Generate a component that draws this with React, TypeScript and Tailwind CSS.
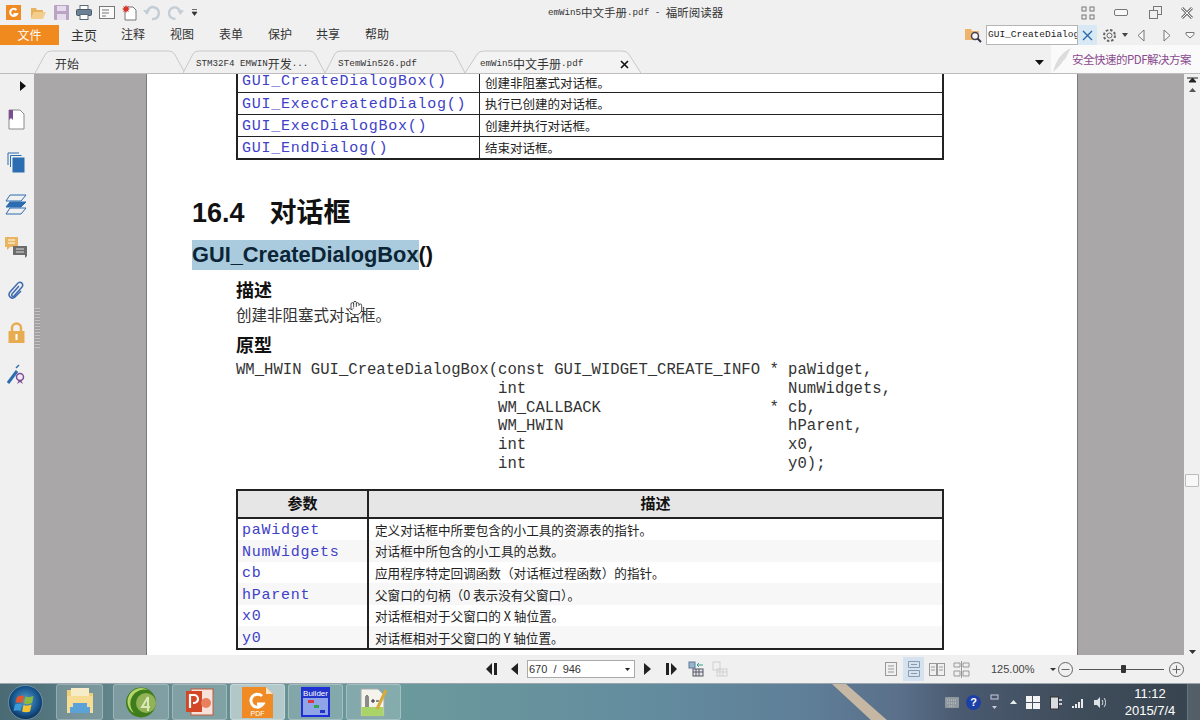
import { Hand } from "lucide-react";

const CJK = '"Noto Sans CJK SC", sans-serif';
const MONO = '"Liberation Mono", monospace';

const topRows = [
  { fn: "GUI_CreateDialogBox()", desc: "创建非阻塞式对话框。", h: "h-[18px]", fnCls: "self-start leading-[16px]", descCls: "self-start leading-[18px]" },
  { fn: "GUI_ExecCreatedDialog()", desc: "执行已创建的对话框。", h: "h-[22px]", fnCls: "pt-[3px]", descCls: "pt-[2px]" },
  { fn: "GUI_ExecDialogBox()", desc: "创建并执行对话框。", h: "h-[22px]", fnCls: "pt-[3px]", descCls: "pt-[2px]" },
  { fn: "GUI_EndDialog()", desc: "结束对话框。", h: "h-[22px]", fnCls: "pt-[3px]", descCls: "pt-[2px]" },
];

const paramRows = [
  { name: "paWidget", desc: "定义对话框中所要包含的小工具的资源表的指针。" },
  { name: "NumWidgets", desc: "对话框中所包含的小工具的总数。" },
  { name: "cb", desc: "应用程序特定回调函数（对话框过程函数）的指针。" },
  { name: "hParent", desc: "父窗口的句柄（0 表示没有父窗口）。" },
  { name: "x0", desc: "对话框相对于父窗口的 X 轴位置。" },
  { name: "y0", desc: "对话框相对于父窗口的 Y 轴位置。" },
];

const codeLines = [
  "WM_HWIN GUI_CreateDialogBox(const GUI_WIDGET_CREATE_INFO * paWidget,",
  "                            int                            NumWidgets,",
  "                            WM_CALLBACK                  * cb,",
  "                            WM_HWIN                        hParent,",
  "                            int                            x0,",
  "                            int                            y0);",
];

const menus = [
  { label: "主页", cls: "w-[50px] text-[13px]" },
  { label: "注释", cls: "w-[49px]" },
  { label: "视图", cls: "w-[49px]" },
  { label: "表单", cls: "w-[49px]" },
  { label: "保护", cls: "w-[48px]" },
  { label: "共享", cls: "w-[49px]" },
  { label: "帮助", cls: "w-[49px]" },
];

const TabShape = ({ active }: { active?: boolean }) => (
  <svg className="absolute inset-0 h-full w-full" viewBox="0 0 100 23" preserveAspectRatio="none">
    <path
      d="M0 23 L7 4 Q8 1 11 1 L89 1 Q92 1 93 4 L100 23"
      fill={active ? "#f3f3f3" : "#f0f0f0"}
      stroke="#c8c8c8"
      strokeWidth="1"
      vectorEffect="non-scaling-stroke"
    />
  </svg>
);

const Tab = ({ className, children, active }: { className: string; children: React.ReactNode; active?: boolean }) => (
  <div className={`relative h-[23px] shrink-0 ${className}`}>
    <TabShape active={active} />
    <div className="relative flex h-full items-center whitespace-nowrap pt-[5px] text-[12px] text-[#333]">{children}</div>
  </div>
);

const SideItem = ({ children }: { children: React.ReactNode }) => (
  <div className="flex h-[42.5px] items-center justify-center">{children}</div>
);

const TaskButton = ({ className, children, active }: { className: string; children: React.ReactNode; active?: boolean }) => (
  <div
    className={`flex h-[36px] shrink-0 items-center justify-center rounded-[3px] border border-[#ffffff40] ${
      active ? "bg-[#ffffff80]" : "bg-[#ffffff2e]"
    } ${className}`}
  >
    {children}
  </div>
);

export default function App() {
  return (
    <div
      className="flex h-[720px] w-[1200px] flex-col overflow-hidden bg-[#f0f0f0]"
      style={{ fontFamily: '"Noto Sans CJK SC", "Liberation Sans", sans-serif' }}
    >
      {/* title bar */}
      <div className="flex h-[25px] shrink-0 items-center pl-[6px]">
        <svg width="15" height="15" viewBox="0 0 15 15">
          <rect width="15" height="15" fill="#f08a24" />
          <path d="M10.500 5 A3.600 3.600 0 1 0 11 9 H7.500" fill="none" stroke="#fff" strokeWidth="2" />
        </svg>
        <svg className="ml-[9px]" width="16" height="14" viewBox="0 0 16 14">
          <path d="M1 2h5l1 2h6v2H4L1 13z" fill="#e8b25c" />
          <path d="M4 6h12l-3 7H1z" fill="#f3cd8c" />
        </svg>
        <svg className="ml-[8px]" width="15" height="15" viewBox="0 0 15 15">
          <rect width="15" height="15" rx="1" fill="#b9a4c6" />
          <rect x="3" y="1" width="9" height="5" fill="#e6dcec" />
          <rect x="3" y="9" width="9" height="6" fill="#e6dcec" />
        </svg>
        <svg className="ml-[7px]" width="16" height="15" viewBox="0 0 16 15">
          <rect x="4" y="0.500" width="8" height="4" fill="#fff" stroke="#5a6a7a" />
          <rect x="0.500" y="4.500" width="15" height="6" rx="1" fill="#6c8196" stroke="#4a5a6a" />
          <rect x="4" y="9.500" width="8" height="5" fill="#fff" stroke="#5a6a7a" />
        </svg>
        <svg className="ml-[7px]" width="16" height="13" viewBox="0 0 16 13">
          <rect x="0.500" y="0.500" width="15" height="12" fill="#fafafa" stroke="#777" />
          <path d="M3 4h7M3 7h7M3 10h4" stroke="#777" />
        </svg>
        <svg className="ml-[7px]" width="15" height="16" viewBox="0 0 15 16">
          <path d="M5 2h6l3 3v10H3V6" fill="#fff" stroke="#777" />
          <path d="M4 0l1 2 2-1-1 2 2 1-2 1 1 2-2-1-1 2-1-2-2 1 1-2-2-1 2-1-1-2 2 1z" fill="#d9342b" />
        </svg>
        <svg className="ml-[6px]" width="18" height="16" viewBox="0 0 18 16">
          <path d="M4 7 A6 6 0 1 1 9 14" fill="none" stroke="#c3cdd6" strokeWidth="2.500" />
          <path d="M0 5h7l-3 5z" fill="#c3cdd6" />
        </svg>
        <svg className="ml-[6px]" width="17" height="16" viewBox="0 0 18 16">
          <path d="M14 7 A6 6 0 1 0 9 14" fill="none" stroke="#c3cdd6" strokeWidth="2.500" />
          <path d="M18 5h-7l3 5z" fill="#c3cdd6" />
        </svg>
        <svg className="ml-[7px]" width="7" height="7" viewBox="0 0 7 7">
          <path d="M1 0.500h5M1 3h5L3.500 6.500z" fill="#333" stroke="#333" strokeWidth="0.700" />
        </svg>
        <div className="ml-[350px] flex w-[176px] items-center whitespace-pre text-[11.500px] text-[#333]">
          <span style={{ fontFamily: MONO }} className="text-[9.200px]">emWin5</span>
          <span>中文手册</span>
          <span style={{ fontFamily: MONO }} className="text-[9.200px]">.pdf - </span>
          <span>福昕阅读器</span>
        </div>
        <div className="ml-[357px] flex items-center">
          <svg width="14" height="14" viewBox="0 0 14 14" fill="none" stroke="#777">
            <rect x="1" y="1" width="4" height="4" />
            <rect x="9" y="1" width="4" height="4" />
            <rect x="1" y="9" width="4" height="4" />
            <rect x="9" y="9" width="4" height="4" />
          </svg>
          <svg className="ml-[19px]" width="14" height="8" viewBox="0 0 14 8">
            <rect x="0.500" y="0.500" width="13" height="6" rx="1.500" fill="#f8f8f8" stroke="#777" />
          </svg>
          <svg className="ml-[21px]" width="13" height="13" viewBox="0 0 13 13" fill="#f0f0f0" stroke="#777">
            <rect x="4.500" y="0.500" width="8" height="8" />
            <rect x="0.500" y="4.500" width="8" height="8" />
          </svg>
          <svg className="ml-[18px]" width="14" height="12" viewBox="0 0 14 12">
            <path d="M2 1l10 10M12 1L2 11" stroke="#777" strokeWidth="3" />
            <path d="M2 1l10 10M12 1L2 11" stroke="#f5f5f5" strokeWidth="1" />
          </svg>
        </div>
      </div>

      {/* ribbon tabs */}
      <div className="flex h-[20px] shrink-0 items-center">
        <div className="flex h-full w-[59px] items-center justify-center bg-[#f08a1e] text-[12px] text-white">文件</div>
        <div className="ml-[12px] flex text-[12px] text-[#333]">
          {menus.map((m) => (
            <span key={m.label} className={m.cls}>{m.label}</span>
          ))}
        </div>
        <svg className="ml-[551px]" width="17" height="16" viewBox="0 0 17 16">
          <path d="M0 2h6l1 2h7v9H0z" fill="#eeb56a" />
          <circle cx="10" cy="9" r="3.500" fill="#f7f7f7" stroke="#445" strokeWidth="1.500" />
          <path d="M12.500 11.500L16 15" stroke="#334" strokeWidth="2" />
        </svg>
        <div
          className="ml-[4px] flex h-[20px] w-[92px] shrink-0 items-center overflow-hidden whitespace-nowrap border border-[#b5b5b5] bg-white pl-[1px] text-[9.500px] text-[#222]"
          style={{ fontFamily: MONO }}
        >
          GUI_CreateDialog
        </div>
        <div className="flex h-[20px] w-[19px] shrink-0 items-center justify-center bg-[#d9e8f5]">
          <svg width="11" height="11" viewBox="0 0 11 11">
            <path d="M1 1l9 9M10 1l-9 9" stroke="#2a6aa8" strokeWidth="1.400" />
          </svg>
        </div>
        <svg className="ml-[5px] shrink-0" width="15" height="15" viewBox="0 0 15 15" fill="none" stroke="#666">
          <circle cx="7.500" cy="7.500" r="2.500" />
          <circle cx="7.500" cy="7.500" r="5.500" strokeDasharray="2.500 1.800" strokeWidth="2" />
        </svg>
        <svg className="ml-[5px] shrink-0" width="6" height="4" viewBox="0 0 6 4">
          <path d="M0 0h6L3 4z" fill="#444" />
        </svg>
        <svg className="ml-[9px] shrink-0" width="8" height="13" viewBox="0 0 8 13">
          <path d="M7 1L1 6.500 7 12z" fill="#f8f8f8" stroke="#777" />
        </svg>
        <svg className="ml-[18px] shrink-0" width="8" height="13" viewBox="0 0 8 13">
          <path d="M1 1l6 5.500L1 12z" fill="#f8f8f8" stroke="#777" />
        </svg>
        <svg className="ml-[14px] shrink-0" width="10" height="8" viewBox="0 0 10 8">
          <path d="M1 1.500h8v2L5 7 1 3.500z" fill="#f8f8f8" stroke="#777" />
        </svg>
      </div>

      {/* document tabs */}
      <div className="flex h-[29px] shrink-0 items-end border-b border-[#bdbdbd]">
        <Tab className="ml-[35px] w-[150px]"><span className="pl-[20px]">开始</span></Tab>
        <Tab className="-ml-[2px] w-[142px]">
          <span className="pl-[13px] text-[9.200px]" style={{ fontFamily: MONO }}>STM32F4 EMWIN</span>
          <span>开发</span>
          <span className="text-[9.200px]" style={{ fontFamily: MONO }}>...</span>
        </Tab>
        <Tab className="w-[140px]">
          <span className="pl-[13px] text-[9.400px]" style={{ fontFamily: MONO }}>STemWin526.pdf</span>
        </Tab>
        <Tab active className="w-[176px]">
          <span className="pl-[15px] text-[9.200px]" style={{ fontFamily: MONO }}>emWin5</span>
          <span>中文手册</span>
          <span className="text-[9.200px]" style={{ fontFamily: MONO }}>.pdf</span>
          <svg className="ml-[37px]" width="9" height="9" viewBox="0 0 9 9">
            <path d="M1 1l7 7M8 1L1 8" stroke="#111" strokeWidth="1.600" />
          </svg>
        </Tab>
        <svg className="mb-[8px] ml-[394px]" width="9" height="5" viewBox="0 0 9 5">
          <path d="M0 0h9L4.500 5z" fill="#111" />
        </svg>
        <div className="ml-[7px] flex h-[28px] w-[150px] items-center bg-[#fafafa] pt-[2px]">
          <svg className="ml-[1px]" width="20" height="26" viewBox="0 0 20 26">
            <path d="M1 25C4 13 10 5 19 1 15 7 15 11 11 14 9 18 5 21 1 25z" fill="#dcdcdc" />
          </svg>
          <span className="whitespace-nowrap text-[11.500px] tracking-[-0.500px] text-[#8a4b8f]">安全快速的PDF解决方案</span>
        </div>
      </div>

      {/* main area */}
      <div className="flex min-h-0 flex-1">
        <div className="flex w-[34px] shrink-0 flex-col items-center pr-[2px]">
          <div className="flex h-[24.500px] w-full items-center justify-end pr-[6px]">
            <svg width="6" height="10" viewBox="0 0 6 10"><path d="M0 0l6 5-6 5z" fill="#111" /></svg>
          </div>
          <SideItem>
            <svg width="17" height="21" viewBox="0 0 17 21">
              <path d="M1 1h11l4 4v15H1z" fill="#fff" stroke="#8a8a8a" />
              <path d="M1 1h4v10L3 9l-2 2z" fill="#7d4d93" />
            </svg>
          </SideItem>
          <SideItem>
            <svg width="18" height="21" viewBox="0 0 18 21" fill="none" stroke="#2c6cb0">
              <path d="M1 13V1h11" />
              <path d="M3.500 15V3.500h11" />
              <rect x="6" y="6" width="11" height="14" fill="#2c6cb0" />
            </svg>
          </SideItem>
          <SideItem>
            <svg width="22" height="21" viewBox="0 0 22 21" stroke="#2c6cb0" fill="none">
              <path d="M5 1h16l-5 6H1z" />
              <path d="M5 8h16l-5 5H1z" fill="#2c6cb0" />
              <path d="M5 14h16l-5 6H1z" />
            </svg>
          </SideItem>
          <SideItem>
            <svg width="22" height="21" viewBox="0 0 22 21">
              <path d="M0 0h13v10H5l-3 3v-3H0z" fill="#e8b660" />
              <path d="M3 3h7M3 6h7" stroke="#fff" />
              <path d="M8 9h14v10l-2 2v-3H8z" fill="#6c6c6c" />
              <path d="M11 12h8M11 15h8" stroke="#ddd" />
            </svg>
          </SideItem>
          <SideItem>
            <svg width="18" height="20" viewBox="0 0 18 20" fill="none">
              <path d="M12 6L5 14c-1 2 1 3 2 2L15 7c2-3-1-6-4-4L3 12c-3 4 2 8 5 5l6-6" stroke="#3f6cb0" strokeWidth="1.500" />
            </svg>
          </SideItem>
          <SideItem>
            <svg width="17" height="21" viewBox="0 0 17 21">
              <path d="M4 9V6a4.500 4.500 0 0 1 9 0v3" fill="none" stroke="#e8ac50" strokeWidth="2.500" />
              <rect x="0.500" y="9" width="16" height="12" fill="#e8ac50" />
              <rect x="7.500" y="12" width="2" height="6" fill="#fff" />
            </svg>
          </SideItem>
          <SideItem>
            <svg width="19" height="21" viewBox="0 0 19 21">
              <path d="M1 19L10 7" stroke="#2c6cb0" strokeWidth="3" />
              <path d="M9 4l3-3" stroke="#2c6cb0" strokeWidth="1.500" />
              <circle cx="13" cy="13" r="3.500" fill="#f0e8f4" stroke="#7d4d93" strokeWidth="1.500" />
              <path d="M10 20l2-4h2l2 4-3-2z" fill="#7d4d93" />
            </svg>
          </SideItem>
        </div>

        {/* left gutter */}
        <div className="relative w-[113px] shrink-0 border-r border-[#7a7a7a] bg-[#a9a7a8]">
          <div className="absolute left-[1px] top-[234px] h-[40px] w-[5px] bg-[repeating-linear-gradient(to_bottom,#c4c4c4_0,#c4c4c4_1px,#a0a0a0_1px,#a0a0a0_3px)]" />
        </div>

        {/* pdf page */}
        <div className="relative w-[930px] shrink-0 overflow-hidden bg-white pl-[45px]">
          <div className="ml-[44px] w-[708px] border-x-2 border-b-2 border-[#222]">
            {topRows.map((r, i) => (
              <div key={r.fn} className={`flex ${r.h} ${i > 0 ? "border-t border-[#222]" : ""}`}>
                <div
                  className="flex w-[242px] items-center whitespace-nowrap border-r border-[#222] pl-[4px] text-[15px] tracking-[0.750px] text-[#4040c8]"
                  style={{ fontFamily: MONO }}
                >
                  <span className={r.fnCls}>{r.fn}</span>
                </div>
                <div className="flex items-center pl-[5px] text-[12.500px] text-[#222]" style={{ fontFamily: CJK }}>
                  <span className={r.descCls}>{r.desc}</span>
                </div>
              </div>
            ))}
          </div>

          <div className="mt-[37px] flex h-[32px] items-center whitespace-pre text-[27px] font-bold text-[#111]" style={{ fontFamily: '"Liberation Sans", ' + CJK }}>
            16.4<span className="ml-[25px]">对话框</span>
          </div>
          <div className="mt-[11px] flex h-[30px] items-center text-[21.800px] font-bold text-[#111]" style={{ fontFamily: '"Liberation Sans", sans-serif' }}>
            <span className="bg-[#a9cbdd] leading-[30px] text-[#0c2536]">GUI_CreateDialogBox</span>()
          </div>

          <div className="ml-[44px]">
            <div className="mt-[7px] flex h-[24px] items-center text-[18px] font-bold text-[#111]">描述</div>
            <div className="mt-[2px] flex h-[24px] items-center text-[15.500px] text-[#333]">创建非阻塞式对话框。</div>
            <div className="mt-[5px] flex h-[24px] items-center text-[18px] font-bold text-[#111]">原型</div>
            <div
              className="mt-[5px] whitespace-pre text-[15.600px] leading-[18.750px] text-[#333]"
              style={{ fontFamily: MONO }}
            >
              {codeLines.map((l) => (
                <div key={l}>{l}</div>
              ))}
            </div>

            <div className="mt-[15px] w-[708px] border-2 border-[#222]">
              <div className="flex h-[28px] border-b-2 border-[#222] bg-[#e6e6e6] text-[15px] font-bold text-[#111]">
                <div className="flex w-[131px] items-center justify-center border-r-2 border-[#222]">参数</div>
                <div className="flex flex-1 items-center justify-center">描述</div>
              </div>
              {paramRows.map((r, i) => (
                <div key={r.name} className={`flex h-[21.600px] ${i % 2 === 1 ? "bg-[#f7f7f7]" : "bg-white"}`}>
                  <div
                    className="flex w-[131px] items-center border-r-2 border-[#222] pl-[4px] pt-[4px] text-[15px] tracking-[0.750px] text-[#4040c8]"
                    style={{ fontFamily: MONO }}
                  >
                    {r.name}
                  </div>
                  <div className="flex items-center pl-[6px] pt-[2px] text-[12.600px] text-[#222]">{r.desc}</div>
                </div>
              ))}
            </div>
          </div>

          <Hand className="absolute left-[200px] top-[226px] text-[#222]" size={16} strokeWidth={1.200} fill="#fff" />
        </div>

        {/* right gutter */}
        <div className="w-[107px] shrink-0 border-l border-[#7a7a7a] bg-[#a9a7a8]" />

        {/* scrollbar */}
        <div className="flex w-[16px] shrink-0 flex-col items-center pt-[3px]">
          <svg width="11" height="6" viewBox="0 0 11 6"><path d="M0 1h11M5.500 1L2 5h7z" fill="#222" stroke="#222" /></svg>
          <svg className="mt-[5px]" width="7" height="4" viewBox="0 0 7 4"><path d="M3.500 0L7 4H0z" fill="#555" /></svg>
          <div className="mt-[382px] h-[13px] w-[14px] rounded-[1px] border border-[#bbb] bg-[#f8f8f8]" />
          <svg className="mt-[163px]" width="7" height="4" viewBox="0 0 7 4"><path d="M0 0h7L3.500 4z" fill="#333" /></svg>
        </div>
      </div>

      {/* status bar */}
      <div className="flex h-[28px] shrink-0 items-center">
        <svg className="ml-[485px]" width="13" height="12" viewBox="0 0 13 12" fill="#222">
          <path d="M7 0v12L1 6zM9 0h3v12H9z" />
        </svg>
        <svg className="ml-[12px]" width="9" height="12" viewBox="0 0 9 12"><path d="M8 0v12L1 6z" fill="#222" /></svg>
        <div className="ml-[8px] flex h-[18px] w-[108px] items-center justify-between border border-[#aaa] bg-white pl-[1px] pr-[4px] text-[11px] text-[#333]" style={{ fontFamily: '"Liberation Sans", sans-serif' }}>
          <span className="whitespace-pre">670  /  946</span>
          <svg width="5" height="3" viewBox="0 0 5 3"><path d="M0 0h5L2.500 3z" fill="#222" /></svg>
        </div>
        <svg className="ml-[8px]" width="9" height="12" viewBox="0 0 9 12"><path d="M1 0v12l7-6z" fill="#222" /></svg>
        <svg className="ml-[13px]" width="13" height="12" viewBox="0 0 13 12" fill="#222">
          <path d="M1 0h3v12H1zM6 0v12l6-6z" />
        </svg>
        <svg className="ml-[10px]" width="16" height="16" viewBox="0 0 16 16" fill="none">
          <rect x="1" y="1" width="6" height="6" fill="#9ab4cc" stroke="#5a7a9a" />
          <path d="M9 4h6M11 2L9 4l2 2" stroke="#3aa08a" />
          <rect x="5" y="8" width="10" height="7" fill="#e8e8e8" stroke="#556" />
          <path d="M8 8v7M11 8v7M5 11h10" stroke="#556" />
        </svg>
        <svg className="ml-[8px]" width="16" height="16" viewBox="0 0 16 16" fill="none" stroke="#cfcfcf">
          <rect x="1" y="1" width="7" height="8" />
          <rect x="5" y="8" width="10" height="7" />
          <path d="M8 8v7M11 8v7M5 11h10" />
        </svg>
        <svg className="ml-[157px]" width="12" height="14" viewBox="0 0 12 14" fill="none" stroke="#999">
          <rect x="0.500" y="0.500" width="11" height="13" />
          <path d="M3 4h6M3 7h6M3 10h6" />
        </svg>
        <div className="ml-[6px] flex h-[24px] w-[21px] items-center justify-center bg-[#d5e3f1]">
          <svg width="12" height="16" viewBox="0 0 12 16" fill="none" stroke="#8a9bb0">
            <path d="M0.500 0.500h11v6h-11zM0.500 9.500h11v6h-11zM3 3.500h6M3 12.500h6" />
          </svg>
        </div>
        <svg className="ml-[5px]" width="16" height="13" viewBox="0 0 16 13" fill="none" stroke="#999">
          <rect x="0.500" y="0.500" width="7" height="12" />
          <rect x="8.500" y="0.500" width="7" height="12" />
          <path d="M2 4h4M2 7h4M10 4h4M10 7h4" />
        </svg>
        <svg className="ml-[8px]" width="17" height="17" viewBox="0 0 17 17" fill="none" stroke="#999">
          <path d="M8.500 0v17M1 2h6v4H1zM10 2h6v4h-6zM1 10h6v5H1zM10 10h6v5h-6z" />
        </svg>
        <span className="ml-[21px] w-[42px] text-[11px] text-[#444]" style={{ fontFamily: '"Liberation Sans", sans-serif' }}>125.00%</span>
        <svg className="ml-[17px]" width="6" height="3" viewBox="0 0 6 3"><path d="M0 0h6L3 3z" fill="#333" /></svg>
        <svg className="ml-[2px]" width="15" height="15" viewBox="0 0 15 15" fill="none" stroke="#666">
          <circle cx="7.500" cy="7.500" r="7" />
          <path d="M3.500 7.500h8" />
        </svg>
        <div className="relative ml-[6px] h-[1px] w-[85px] bg-[#555]">
          <div className="absolute left-[42px] top-[-4px] h-[8px] w-[5px] rounded-[1px] bg-[#333]" />
        </div>
        <svg className="ml-[5px]" width="15" height="15" viewBox="0 0 15 15" fill="none" stroke="#666">
          <circle cx="7.500" cy="7.500" r="7" />
          <path d="M3.500 7.500h8M7.500 3.500v8" />
        </svg>
      </div>

      {/* taskbar */}
      <div className="relative flex h-[37px] shrink-0 items-center overflow-hidden border-t border-[#9aa6ac] bg-[linear-gradient(to_right,#4a6a74_0%,#62878c_10%,#6b9a9c_33%,#638c9e_54%,#5f7f98_67%,#5a6f8a_75%,#4a5a70_80%,#3f4c5a_90%,#37444f_100%)]">
        <svg className="absolute left-[800px] top-0" width="90" height="37" viewBox="0 0 90 37">
          <path d="M32 0L46 0 88 37 72 37z" fill="#d8c3a8" opacity="0.850" />
        </svg>
        <svg className="relative ml-[8px] shrink-0" width="35" height="35" viewBox="0 0 35 35">
          <defs>
            <radialGradient id="orb" cx="50%" cy="45%" r="55%">
              <stop offset="0%" stopColor="#5aa0cc" />
              <stop offset="70%" stopColor="#17568f" />
              <stop offset="100%" stopColor="#0d2f52" />
            </radialGradient>
          </defs>
          <circle cx="17.500" cy="17.500" r="17" fill="url(#orb)" stroke="#9ec3dc" strokeOpacity="0.500" />
          <path d="M9 12q3.500-2.500 7-1l-1.500 7q-3-1.500-7 0z" fill="#e2572c" />
          <path d="M17.500 11.500q3.500 1.500 8-.5l-1.500 7q-4 2-8 .5z" fill="#8db83f" />
          <path d="M7 19.500q4-1.500 7 0L12.500 26q-3-1.500-7 0z" fill="#3b9ad9" />
          <path d="M15.500 20q4 1.500 8-.5L22 26.500q-4 1.500-8 0z" fill="#f4c430" />
        </svg>
        <TaskButton className="relative ml-[13px] w-[47px]">
          <svg width="30" height="28" viewBox="0 0 30 28">
            <path d="M2 2h10l2 3h14v20H2z" fill="#f1cf7a" />
            <rect x="6" y="0" width="18" height="8" fill="#f6ecc8" />
            <rect x="2" y="8" width="26" height="17" fill="#f6dc94" />
            <path d="M8 15h14v4h3v6H5v-6h3z" fill="#5aa2d8" />
          </svg>
        </TaskButton>
        <TaskButton className="relative ml-[10px] w-[56px]">
          <svg width="31" height="31" viewBox="0 0 31 31">
            <circle cx="15" cy="15.500" r="15" fill="#3f7d1c" />
            <path d="M8 26A13 13 0 0 1 22 3 14 14 0 0 0 8 26z" fill="#b4d66a" />
            <circle cx="20" cy="16" r="10" fill="#8fb356" />
            <path d="M22 10l-6 10h8M22 10v14" stroke="#dbe8b8" strokeWidth="2" fill="none" />
          </svg>
        </TaskButton>
        <TaskButton className="relative ml-[3px] w-[55px]">
          <svg width="29" height="28" viewBox="0 0 29 28">
            <rect x="6" y="1" width="22" height="26" fill="#f6e2d8" stroke="#c05a3c" />
            <rect x="1" y="3" width="16" height="21" fill="#d24726" />
            <path d="M5 20V7h4a3.500 3.500 0 0 1 0 8H8" fill="none" stroke="#fff" strokeWidth="2.200" />
            <circle cx="21" cy="15" r="5" fill="#e8805e" />
          </svg>
        </TaskButton>
        <TaskButton active className="relative ml-[3px] w-[55px]">
          <svg width="31" height="31" viewBox="0 0 31 31">
            <path d="M0 0h24l7 7v24H0z" fill="#f08a24" />
            <path d="M24 0l7 7h-7z" fill="#fbe3c4" />
            <path d="M20 9a6.500 6.500 0 1 0 1 8h-6" fill="none" stroke="#fff" strokeWidth="3" />
            <text x="15.500" y="29" textAnchor="middle" fontSize="7" fill="#fff" fontFamily="Liberation Sans">PDF</text>
          </svg>
        </TaskButton>
        <TaskButton className="relative ml-[3px] w-[55px]">
          <div className="relative flex h-[30px] w-[29px] flex-col items-center border-2 border-[#1c2fd8] bg-[#8fa5e8]">
            <span className="bg-[#2136c8] px-[1px] text-[8px] leading-[9px] text-white" style={{ fontFamily: '"Liberation Sans", sans-serif' }}>Builder</span>
            <svg width="22" height="17" viewBox="0 0 22 17">
              <rect x="3" y="2" width="6" height="3" fill="#d9364a" />
              <rect x="9" y="7" width="5" height="3" fill="#2ea84f" />
              <rect x="15" y="12" width="5" height="3" fill="#2136c8" />
            </svg>
          </div>
        </TaskButton>
        <TaskButton className="relative ml-[3px] w-[55px]">
          <svg width="30" height="31" viewBox="0 0 30 31">
            <path d="M2 2h17l6 6v21H2z" fill="#f4f4ec" stroke="#aaa" />
            <rect x="2.500" y="20" width="22" height="9" fill="#a8d468" />
            <path d="M7 20V10c0-2 2-2 2 0v10M12 14h4M14 12v4M17 14h3" stroke="#222" fill="none" />
            <path d="M18 22L27 3" stroke="#d9a93a" strokeWidth="3" />
          </svg>
        </TaskButton>

        {/* tray */}
        <svg className="relative ml-[544px]" width="14" height="11" viewBox="0 0 14 11">
          <rect width="14" height="11" rx="1" fill="#8f989e" />
          <path d="M2 3h10M2 6h10M4 9h6" stroke="#c5cbce" strokeDasharray="1 1" />
        </svg>
        <div className="relative ml-[7px] flex h-[15px] w-[15px] items-center justify-center rounded-full bg-[#1c3fa8] text-[11px] font-bold leading-none text-white" style={{ fontFamily: '"Liberation Sans", sans-serif' }}>?</div>
        <svg className="relative ml-[9px]" width="9" height="17" viewBox="0 0 9 17">
          <rect x="1" y="1" width="7" height="4" fill="none" stroke="#ccd" />
          <path d="M2 12h5l-2.500 3z" fill="#ccd" />
        </svg>
        <svg className="relative ml-[11px]" width="7" height="4" viewBox="0 0 7 4"><path d="M3.500 0L7 4H0z" fill="#e8ecef" /></svg>
        <svg className="relative ml-[9px]" width="14" height="13" viewBox="0 0 14 13" fill="#f4f4f4">
          <path d="M0 0h6v6H0zM7 0h7v6H7zM0 7h6v6H0zM7 7h7v6H7z" />
        </svg>
        <svg className="relative ml-[10px]" width="12" height="15" viewBox="0 0 12 15">
          <rect x="0.500" y="2" width="8" height="12" fill="#d8dcdf" stroke="#333" />
          <path d="M9 5h3M9 9h3" stroke="#f4f4f4" strokeWidth="1.500" />
        </svg>
        <svg className="relative ml-[10px]" width="13" height="11" viewBox="0 0 13 11" fill="#e8ecef">
          <path d="M0 9h2v2H0zM3 7h2v4H3zM6 5h2v6H6zM9 2h2v9H9z" />
        </svg>
        <svg className="relative ml-[9px]" width="13" height="13" viewBox="0 0 13 13" fill="none">
          <path d="M0 4h3l3-3v11L3 9H0z" fill="#dfe3e6" />
          <path d="M8 4c1 1 1 4 0 5M10 2c2 2 2 7 0 9" stroke="#dfe3e6" />
        </svg>
        <div className="relative ml-[7px] flex w-[72px] flex-col items-center text-[13px] leading-[17px] text-white" style={{ fontFamily: '"Liberation Sans", sans-serif' }}>
          <span>11:12</span>
          <span>2015/7/4</span>
        </div>
        <div className="relative ml-[1px] h-full flex-1 border-l border-[#667680] bg-[#ffffff24]" />
      </div>
    </div>
  );
}
